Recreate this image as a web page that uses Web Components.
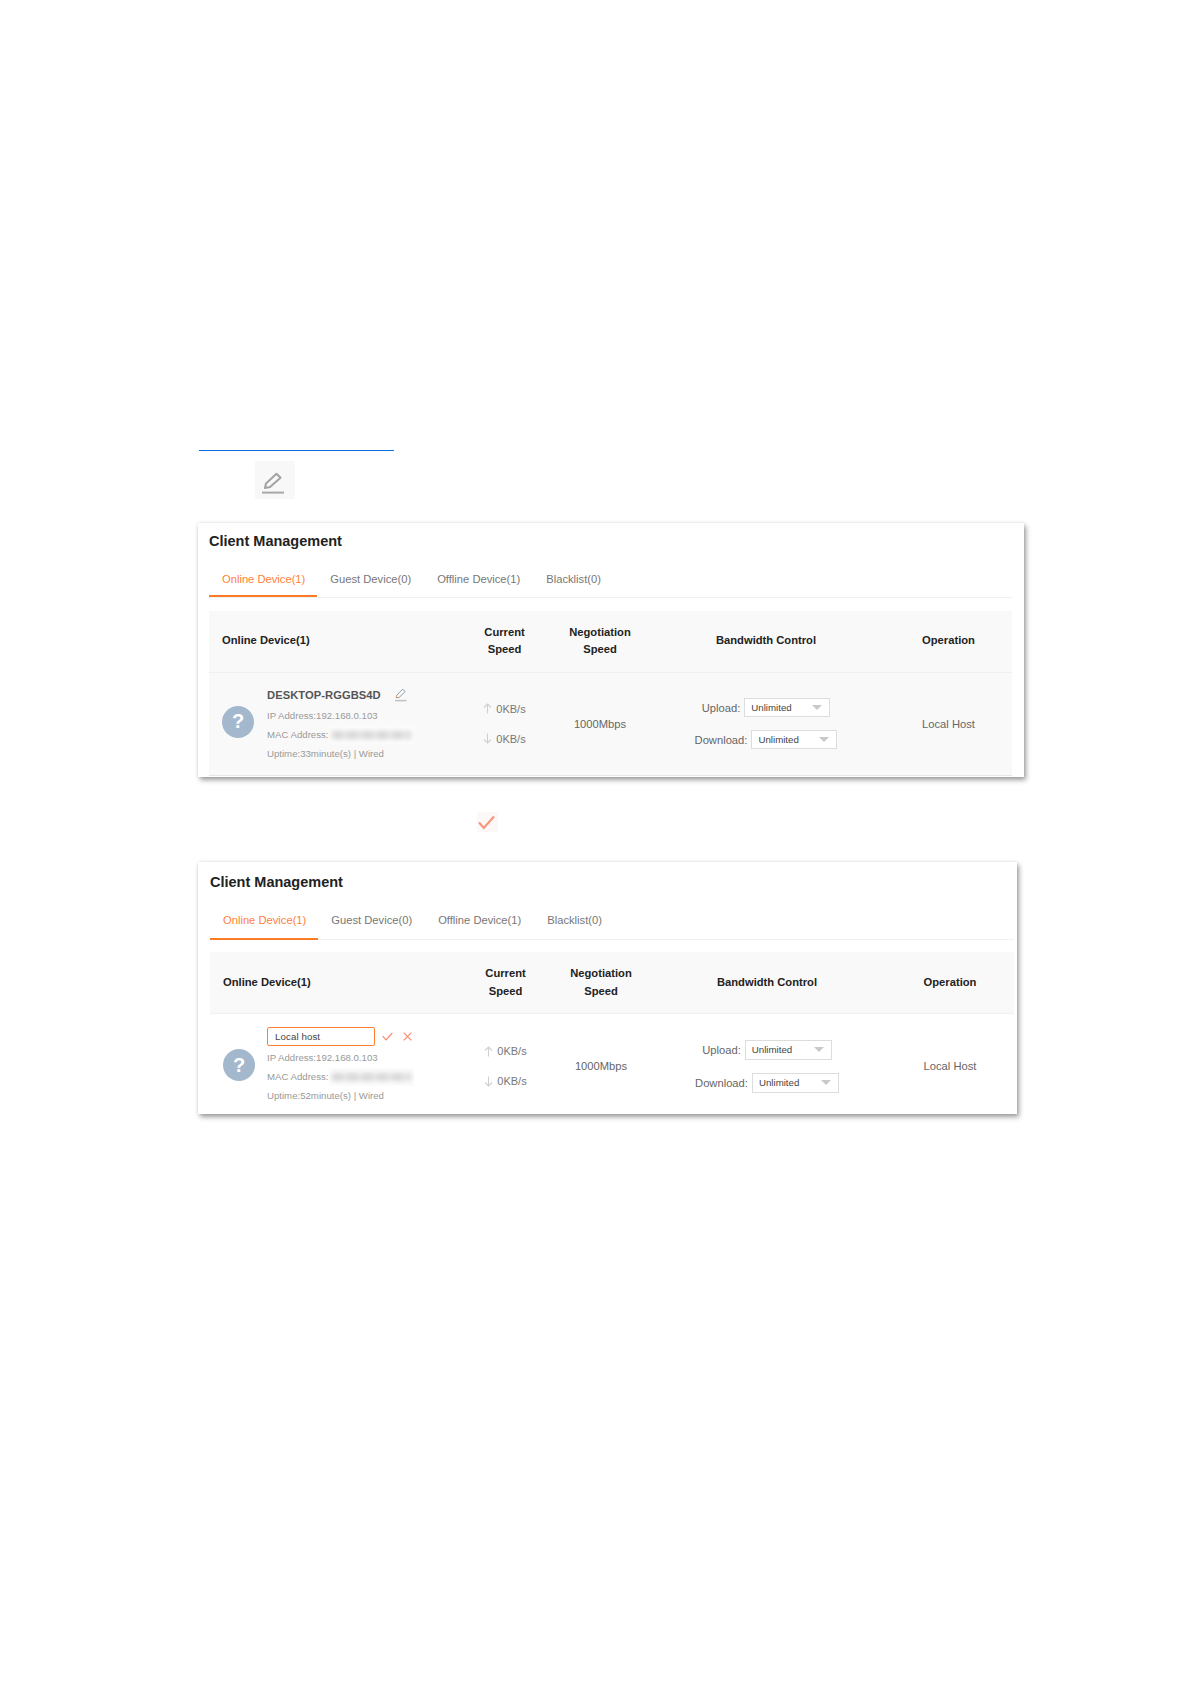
<!DOCTYPE html>
<html lang="en"><head><meta charset="utf-8"><title>Client Management</title>
<style>
html,body{margin:0;background:#fff}
body{font-family:"Liberation Sans",Arial,sans-serif}
</style></head><body>
<doc-page>
  <doc-rule></doc-rule>
  <icon-chip kind="pencil"></icon-chip>
  <client-card variant="a" uptime="33" ip="IP Address:192.168.0.103"></client-card>
  <icon-chip kind="check"></icon-chip>
  <client-card variant="b" uptime="52" ip="IP Address:192.168.0.103"></client-card>
</doc-page>
<script>
function def(name,render){customElements.define(name,class extends HTMLElement{connectedCallback(){if(this.shadowRoot)return;this.attachShadow({mode:'open'}).innerHTML=render(this)}})}

def('doc-page',()=>`<style>:host{display:block;width:1191px;height:1684px;box-sizing:border-box;padding-top:450px;overflow:hidden}</style><slot></slot>`);

def('doc-rule',()=>`<style>:host{display:block;width:195px;height:1px;margin-left:199px;background:#0b6be0}</style>`);

def('icon-chip',el=>{
  if(el.getAttribute('kind')==='pencil')return `<style>:host{display:flex;align-items:flex-end;box-sizing:border-box;width:40px;height:38px;margin:10px 0 24px 255px;padding:0 0 5px 7px;background:#f8f8f8}svg{filter:blur(.5px)}</style><svg width="23" height="22" viewBox="0 0 23 22"><path d="M3 16 4 11.5 14.5 1.8 18.5 5.8 8 15Z" fill="none" stroke="#a4a4a4" stroke-width="2.1" stroke-linejoin="round"/><path d="M0 20.6H22" stroke="#a8a8a8" stroke-width="2"/></svg>`;
  return `<style>:host{display:flex;align-items:center;justify-content:center;box-sizing:border-box;width:21px;height:20px;margin:35px 0 30px 477px;padding-right:2px;background:#fbf8f7}svg{filter:blur(.3px)}</style><svg width="17" height="15" viewBox="0 0 17 15"><path d="M1 7.5 5.8 13 16 1.5" fill="none" stroke="#fa9478" stroke-width="2.1"/></svg>`;
});

def('select-box',()=>`<style>:host{display:inline-flex;align-items:center;justify-content:space-between;box-sizing:border-box;width:var(--sel-w,86px);height:var(--sel-h,19px);padding:0 7px 0 6px;border:1px solid #ddd;background:#fff;color:#444;font-size:9.7px;text-align:left}i{width:0;height:0;border:5px solid transparent;border-top:5px solid #c9c9c9;border-bottom:0}</style><span>Unlimited</span><i></i>`);

def('speed-cell',()=>{
  const arrow=d=>`<svg width="9" height="11" viewBox="0 0 9 11"><path d="${d}" fill="none" stroke="#d0d0d0" stroke-width="1.1"/></svg>`;
  return `<style>:host{display:flex;flex-direction:column;gap:11px;align-items:center;color:#777;font-size:11px}div{display:flex;align-items:center;gap:4px;height:19px}</style>
  <div>${arrow('M4.5 10.5V1M1 4.5 4.5 1 8 4.5')}<span>0KB/s</span></div>
  <div>${arrow('M4.5 .5V10M1 6.5 4.5 10 8 6.5')}<span>0KB/s</span></div>`;
});

def('mac-blur',()=>`<style>:host{display:inline-block;width:85px;height:18px;vertical-align:middle;overflow:hidden;position:relative;background:#fcfcfc}i{position:absolute;left:3px;right:3px;top:5px;height:8px;background:repeating-linear-gradient(90deg,#d6d6d6 0 11px,#e8e8e8 11px 15px);filter:blur(2.5px)}</style><i></i>`);

def('device-info',el=>{
  const b=el.getAttribute('variant')==='b';
  const head=b?`<div class="edit"><span class="inp">Local host</span>
      <svg width="11" height="9" viewBox="0 0 11 9"><path d="M.7 4.2 4 7.8 10.3 1" fill="none" stroke="#f98a6c" stroke-width="1.2"/></svg>
      <svg width="9" height="9" viewBox="0 0 9 9"><path d="M.7.7 8.3 8.3M8.3.7.7 8.3" fill="none" stroke="#f98a6c" stroke-width="1.2"/></svg></div>`
    :`<div class="name"><b>DESKTOP-RGGBS4D</b><svg width="12" height="14" viewBox="0 0 12 14"><path d="M1.2 9.6 1.8 7 7.8 1.2 10.2 3.6 4.2 9.4Z" fill="none" stroke="#8f9aa6" stroke-width="1" stroke-linejoin="round"/><path d="M1.2 9.6 1.8 7" stroke="#e9a877" stroke-width="1"/><path d="M0 12.6H11.5" stroke="#c4c4c4" stroke-width="1.6"/></svg></div>`;
  return `<style>:host{display:block;color:#999;font-size:9.65px;margin-bottom:${b?3:0}px}
  .name{display:flex;align-items:center;gap:14px;height:21px;color:#555}
  b{font-size:11.2px;letter-spacing:.05px}
  .edit{display:flex;align-items:center;height:23px}
  .inp{box-sizing:border-box;display:flex;align-items:center;width:108px;height:19px;padding-left:7px;margin-right:7px;border:1px solid #ff7f32;border-radius:2px;background:#fff;color:#444;font-size:9.7px;letter-spacing:.1px}
  .edit svg+svg{margin-left:10px}
  .l{height:19px;line-height:19px;white-space:nowrap}</style>
  ${head}
  <div class="l">${el.getAttribute('ip')}</div>
  <div class="l">MAC Address:<mac-blur></mac-blur></div>
  <div class="l">Uptime:${el.getAttribute('uptime')}minute(s) | Wired</div>`;
});

def('client-card',el=>{
  const v=el.getAttribute('variant'), b=v==='b';
  const tabs=['Online Device(1)','Guest Device(0)','Offline Device(1)','Blacklist(0)'];
  return `<style>
  :host{display:block;box-sizing:border-box;background:#fff;
    width:${b?819:826}px;margin-left:198px;padding:0 ${b?3:12}px ${b?0:1}px ${b?12:11}px;
    box-shadow:2px 3px 5px rgba(0,0,0,.38),0 0 3px rgba(0,0,0,.1);color:#666;font-size:11.2px}
  h2{margin:0;height:${b?39:36}px;line-height:${b?40:36}px;font-size:14.5px;font-weight:bold;color:#222}
  nav{display:flex;height:38px;border-bottom:1px solid #f0f0f0;margin-bottom:${b?12:13}px;box-sizing:content-box}
  nav a{display:block;box-sizing:border-box;height:${b?39:38}px;line-height:${b?38:40}px;padding:0 13px;color:#777;white-space:nowrap}
  nav a.on{padding-right:12px;color:#ff7f3a;border-bottom:2px solid #ff7a24}
  .g{display:grid;grid-template-columns:248px 95px 96px 236px 1fr;align-items:center;text-align:center}
  .g>:last-child{padding-left:1px}
  .hd{height:62px;box-sizing:border-box;padding-bottom:${b?0:1}px;background:#f9f9f9;border-bottom:1px solid #f1f1f1;font-weight:bold;font-size:11.2px;line-height:17.5px;color:#222}
  .hd>:first-child{text-align:left;padding-left:13px}
  .row{height:${b?100:103}px;box-sizing:border-box;background:${b?'#fff':'#f9f9f9'};${b?'padding-top:4px;':'padding-bottom:1px;border-bottom:1px solid #e6e6e6;'}}
  .dev{display:flex;align-items:center;gap:${b?12:13}px;padding-left:13px;text-align:left}
  .av{flex:none;display:flex;align-items:center;justify-content:center;width:32px;height:32px;margin-bottom:${b?2:4}px;border-radius:50%;background:#a3b8cd;color:#fff;font:bold 20px "Liberation Sans",Arial,sans-serif}
  .bw{display:flex;flex-direction:column;gap:13px;align-items:center;--sel-w:${b?'87px':'86px'};--sel-h:${b?'20px':'19px'}}
  .bw>div{display:flex;align-items:center}
  .bw span.t{margin-right:4px}
  </style>
  <h2>Client Management</h2>
  <nav>${tabs.map((t,i)=>`<a class="${i?'':'on'}">${t}</a>`).join('')}</nav>
  <div class="g hd"><div>Online Device(1)</div><div>Current<br>Speed</div><div>Negotiation<br>Speed</div><div>Bandwidth Control</div><div>Operation</div></div>
  <div class="g row">
    <div class="dev"><div class="av">?</div><device-info variant="${v}" uptime="${el.getAttribute('uptime')}" ip="${el.getAttribute('ip')}"></device-info></div>
    <speed-cell></speed-cell>
    <div>1000Mbps</div>
    <div class="bw"><div><span class="t">Upload:</span><select-box></select-box></div><div><span class="t">Download:</span><select-box></select-box></div></div>
    <div>Local Host</div>
  </div>`;
});
</script>
</body></html>
